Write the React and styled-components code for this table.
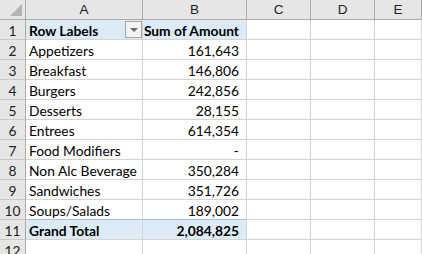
import styled, { createGlobalStyle } from 'styled-components';

const GlobalStyle = createGlobalStyle`
  body {
    margin: 0;
    background: #ffffff;
    font-family: Lato, "Liberation Sans", sans-serif;
  }
`;

const Sheet = styled.div`
  display: grid;
  grid-template-columns: 26px 117px 104px 64px 64px 1fr;
  grid-auto-rows: 20px;
  width: 422px;
  height: 254px;
  overflow: hidden;
  font-size: 13.8px;
  color: #000;
`;

const Corner = styled.div`
  position: relative;
  box-sizing: border-box;
  background: #e6e6e6;
  border-right: 1px solid #ababab;
  border-bottom: 1px solid #ababab;
  &::after {
    content: '';
    position: absolute;
    right: 3px;
    bottom: 3px;
    border-left: 12px solid transparent;
    border-bottom: 12px solid #b4b4b4;
  }
`;

const ColHead = styled.div`
  box-sizing: border-box;
  background: #e6e6e6;
  border-right: 1px solid #ababab;
  border-bottom: 1px solid #ababab;
  display: flex;
  align-items: center;
  justify-content: center;
  font-family: "Liberation Sans", sans-serif;
  font-size: 13.5px;
  color: #222;
`;

const RowHead = styled.div`
  box-sizing: border-box;
  background: #e6e6e6;
  border-right: 1px solid #ababab;
  border-bottom: 1px solid #c8c8c8;
  display: flex;
  align-items: center;
  justify-content: center;
  padding-top: 1px;
  color: #222;
`;

const Cell = styled.div`
  box-sizing: border-box;
  border-right: 1px solid #d4d4d4;
  border-bottom: 1px solid #d4d4d4;
  display: flex;
  align-items: center;
  justify-content: ${p => (p.$num ? 'flex-end' : 'flex-start')};
  padding: ${p => (p.$num ? '1px 7px 0 2px' : '1px 3px 0')};
  white-space: nowrap;
  overflow: hidden;
  font-weight: ${p => (p.$bold ? 700 : 400)};
  background: ${p => (p.$blue ? '#ddebf7' : 'transparent')};
  ${p => p.$total && 'border-top: 1px solid #9bc2e6; margin-top: -1px;'}
`;

const HeadLabel = styled(Cell)`
  justify-content: space-between;
  padding-right: 0;
`;

const FilterButton = styled.span`
  box-sizing: border-box;
  width: 17px;
  height: 17px;
  margin-top: -1px;
  border: 1px solid #a6a6a6;
  background: #f3f3f3;
  display: flex;
  align-items: center;
  justify-content: center;
  &::after {
    content: '';
    border-left: 4px solid transparent;
    border-right: 4px solid transparent;
    border-top: 4px solid #6b6b6b;
  }
`;

const rows = [
  ['Appetizers', '161,643'],
  ['Breakfast', '146,806'],
  ['Burgers', '242,856'],
  ['Desserts', '28,155'],
  ['Entrees', '614,354'],
  ['Food Modifiers', '-'],
  ['Non Alc Beverage', '350,284'],
  ['Sandwiches', '351,726'],
  ['Soups/Salads', '189,002'],
];

const Blank = () => (
  <>
    <Cell />
    <Cell />
    <Cell />
  </>
);

export default function App() {
  return (
    <>
      <GlobalStyle />
      <Sheet>
        <Corner />
        {['A', 'B', 'C', 'D', 'E'].map(c => (
          <ColHead key={c}>{c}</ColHead>
        ))}

        <RowHead>1</RowHead>
        <HeadLabel $bold $blue>
          Row Labels
          <FilterButton />
        </HeadLabel>
        <Cell $bold $blue $num>Sum of Amount</Cell>
        <Blank />

        {rows.map(([label, amount], i) => (
          <Row key={label} n={i + 2} label={label} amount={amount} />
        ))}

        <RowHead>11</RowHead>
        <Cell $bold $blue $total>Grand Total</Cell>
        <Cell $bold $blue $total $num>2,084,825</Cell>
        <Blank />

        <RowHead>12</RowHead>
        <Cell />
        <Cell />
        <Blank />
      </Sheet>
    </>
  );
}

function Row({ n, label, amount }) {
  return (
    <>
      <RowHead>{n}</RowHead>
      <Cell>{label}</Cell>
      <Cell $num>{amount}</Cell>
      <Blank />
    </>
  );
}
